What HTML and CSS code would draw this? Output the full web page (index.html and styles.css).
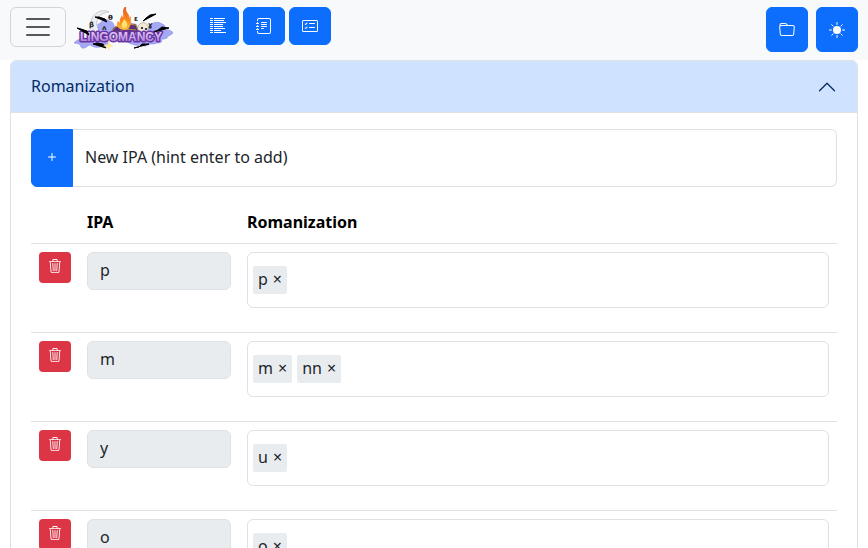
FILE: index.html
```html
<!DOCTYPE html>
<html lang="en">
<head>
<meta charset="utf-8">
<meta name="viewport" content="width=device-width, initial-scale=1">
<title>Lingomancy</title>
<link rel="stylesheet" href="styles.css">
</head>
<body>
<svg class="sprite" aria-hidden="true">
  <symbol id="trash" viewBox="0 0 16 16"><path d="M6.500 1h3a.5.5 0 0 1 .5.5v1H6v-1a.5.5 0 0 1 .5-.5M11 2.500v-1A1.500 1.500 0 0 0 9.500 0h-3A1.500 1.500 0 0 0 5 1.500v1H1.500a.5.5 0 0 0 0 1h.538l.853 10.660A2 2 0 0 0 4.885 16h6.230a2 2 0 0 0 1.994-1.840l.853-10.660h.538a.5.5 0 0 0 0-1zm1.958 1-.846 10.580a1 1 0 0 1-.997.920h-6.230a1 1 0 0 1-.997-.920L3.042 3.500zm-7.487 1a.5.5 0 0 1 .528.470l.5 8.500a.5.5 0 0 1-.998.060L5 5.030a.5.5 0 0 1 .470-.530Zm5.058 0a.5.5 0 0 1 .470.530l-.5 8.500a.5.5 0 1 1-.998-.060l.5-8.500a.5.5 0 0 1 .528-.470M8 4.500a.5.5 0 0 1 .5.5v8.500a.5.5 0 0 1-1 0V5a.5.5 0 0 1 .5-.5"/></symbol>
</svg>
<nav class="navbar" aria-label="Main">
  <div class="nav-group">
    <button class="toggler" type="button" aria-label="Toggle navigation">
      <svg width="30" height="30" viewBox="0 0 30 30"><path d="M4 7h22M4 15h22M4 23h22"/></svg>
    </button>
    <a class="brand" href="#">
      <svg class="logo" width="100" height="44" viewBox="74 7 100 44" role="img" aria-label="Lingomancy">
        <defs>
          <linearGradient id="letters" x1="0" y1="0" x2="0" y2="1"><stop offset="0" stop-color="#e6d2f7"/><stop offset=".5" stop-color="#cdaeea"/><stop offset="1" stop-color="#9a66cc"/></linearGradient>
          <linearGradient id="fire" x1="0" y1="0" x2="0" y2="1"><stop offset="0" stop-color="#e75a20"/><stop offset=".6" stop-color="#f98b20"/><stop offset="1" stop-color="#ffbd3d"/></linearGradient>
        </defs>
        <path class="moon" d="M109 12c-6-4-17 1-18 10-1 6 3 10 9 11h13c-13 0-18-5-16-12 1-5 5-8 12-9z"/>
        <g class="cloud">
          <path d="M98 27c-1-3 1-4 3-4 0-4 6-5 8-2 4 0 6 4 5 7l3 5H99z"/>
          <path d="M143 33c1-4 4-5 6-7 3-4 10-5 13-2 4 1 3 3 2 6 3-1 9 1 9 3-1 2-5 2-6 5-4 2-8 1-11 1z"/>
          <path d="M74 43c2-3 6-4 10-5h22c3 2 4 5 1 7-2 2-5 1-7 2-4 1-7 0-10-2-3 1-5 4-8 3-2-1-1-3-3-4z"/>
          <path d="M126 41c6-2 20-3 35-1 2 2 0 3-4 3-3 2-6 0-9 2-3 2-5 1-7 0-5 2-7-1-10-1z"/>
        </g>
        <path class="book" d="M109 35l5-8 13-4 9 1 3 7-8 4z"/>
        <path class="book-edge" d="M110 34l5-7 12-3 9 1 2 5M114 34l10-5 12 1"/>
        <path fill="url(#fire)" d="M124 30c-6-1-9-4-6-9l2 2c-1-4 1-5 2-8l1 3c1-3-1-6 1-10 1-2 3-1 2 1 0 4 4 5 3 9l2-2c-1 4 1 6-1 10-1 3-3 4-6 4z"/>
        <path class="flame" d="M123 28c-3-3 0-6 1-9 2 2 4 4 3 7 0 1-1 2-4 2z"/>
        <path class="skull" d="M138 27c1-5 8-6 10-1 1 3-1 5-3 7h-5c-1-1-3-4-2-6z"/>
        <circle cx="142" cy="28" r="1"/><circle cx="146" cy="29" r="1"/>
        <g class="glyphs"><text x="108" y="20">θ</text><text x="89" y="27">β</text><text x="102" y="30">ʌ</text><text x="134" y="21">ɛ</text><text x="148" y="27">ɣ</text></g>
        <text class="wordmark" x="80" y="41">LINGOMANCY</text>
        <g class="quill">
          <path d="M95 17l12 5-2-3-6-2zM77 28l12 7-2-4-6-2zM93 44l13 4-3-4-6-1zM143 21l13-7-6 1-4 3zM154 32l15-4-7-1-4 3zM134 48l15-4-7 0-3 3z"/>
        </g>
        <path class="spark" d="M109 39l1 5 4 2-4 1-1 4-2-4-4-1 5-2z"/>
      </svg>
    </a>
    <div class="tools">
      <button class="btn" type="button" aria-label="Lexicon"><svg class="icon line" viewBox="0 0 16 16"><path d="M0 .5h3M0 2.500h3M0 4.500h3M0 6.500h3M0 8.500h3M0 10.500h3M0 12.500h3M0 14.500h3M4 .5h11M4 2.500h10M4 4.500h12M4 6.500h9M4 8.500h9M4 10.500h11M4 12.500h7M4 14.500h12"/></svg></button>
      <button class="btn" type="button" aria-label="Journal"><svg class="icon" viewBox="0 0 16 16"><path d="M5 10.500a.5.5 0 0 1 .5-.5h2a.5.5 0 0 1 0 1h-2a.5.5 0 0 1-.5-.5m0-2a.5.5 0 0 1 .5-.5h5a.5.5 0 0 1 0 1h-5a.5.5 0 0 1-.5-.5m0-2a.5.5 0 0 1 .5-.5h5a.5.5 0 0 1 0 1h-5a.5.5 0 0 1-.5-.5m0-2a.5.5 0 0 1 .5-.5h5a.5.5 0 0 1 0 1h-5a.5.5 0 0 1-.5-.5"/><path d="M3 0h10a2 2 0 0 1 2 2v12a2 2 0 0 1-2 2H3a2 2 0 0 1-2-2v-1h1v1a1 1 0 0 0 1 1h10a1 1 0 0 0 1-1V2a1 1 0 0 0-1-1H3a1 1 0 0 0-1 1v1H1V2a2 2 0 0 1 2-2"/><path d="M1 5v-.5a.5.5 0 0 1 1 0V5h.5a.5.5 0 0 1 0 1h-2a.5.5 0 0 1 0-1zm0 3v-.5a.5.5 0 0 1 1 0V8h.5a.5.5 0 0 1 0 1h-2a.5.5 0 0 1 0-1zm0 3v-.5a.5.5 0 0 1 1 0v.5h.5a.5.5 0 0 1 0 1h-2a.5.5 0 0 1 0-1z"/></svg></button>
      <button class="btn" type="button" aria-label="Checklist"><svg class="icon" viewBox="0 0 16 16"><path d="M14.500 3a.5.5 0 0 1 .5.5v9a.5.5 0 0 1-.5.5h-13a.5.5 0 0 1-.5-.5v-9a.5.5 0 0 1 .5-.5zm-13-1A1.500 1.500 0 0 0 0 3.500v9A1.500 1.500 0 0 0 1.500 14h13a1.500 1.500 0 0 0 1.500-1.500v-9A1.500 1.500 0 0 0 14.500 2z"/><path d="M7 5.500a.5.5 0 0 1 .5-.5h5a.5.5 0 0 1 0 1h-5a.5.5 0 0 1-.5-.5m-1.496-.854a.5.5 0 0 1 0 .708l-1.500 1.500a.5.5 0 0 1-.708 0l-.5-.5a.5.5 0 1 1 .708-.708l.146.147 1.146-1.147a.5.5 0 0 1 .708 0M7 9.500a.5.5 0 0 1 .5-.5h5a.5.5 0 0 1 0 1h-5a.5.5 0 0 1-.5-.5m-1.496-.854a.5.5 0 0 1 0 .708l-1.500 1.500a.5.5 0 0 1-.708 0l-.5-.5a.5.5 0 0 1 .708-.708l.146.147 1.146-1.147a.5.5 0 0 1 .708 0"/></svg></button>
    </div>
  </div>
  <div class="actions">
    <button class="btn" type="button" aria-label="Open file"><svg class="icon" viewBox="0 0 16 16"><path d="M.54 3.870.5 3a2 2 0 0 1 2-2h3.672a2 2 0 0 1 1.414.586l.828.828A2 2 0 0 0 9.828 3h3.982a2 2 0 0 1 1.992 2.181l-.637 7A2 2 0 0 1 13.174 14H2.826a2 2 0 0 1-1.991-1.819l-.637-7a2 2 0 0 1 .342-1.310zM2.190 4a1 1 0 0 0-.996 1.090l.637 7a1 1 0 0 0 .995.910h10.348a1 1 0 0 0 .995-.910l.637-7A1 1 0 0 0 13.810 4zm4.690-1.707A1 1 0 0 0 6.172 2H2.500a1 1 0 0 0-1 .981l.006.139q.323-.119.684-.120h5.396z"/></svg></button>
    <button class="btn" type="button" aria-label="Light theme"><svg class="icon line" viewBox="0 0 16 16"><circle class="disc" cx="8" cy="8" r="4"/><path stroke-linecap="round" d="M8 .5v2M8 13.500v2M.5 8h2M13.500 8h2M2.700 2.700l1.400 1.400M11.900 11.900l1.400 1.400M13.300 2.700l-1.400 1.400M4.100 11.900l-1.400 1.400"/></svg></button>
  </div>
</nav>
<main class="container">
  <section class="accordion">
    <h2 class="accordion-header">
      <button class="accordion-button" type="button" aria-expanded="true" aria-controls="romanization">
        <span>Romanization</span>
        <svg class="chevron" width="20" height="20" viewBox="0 0 16 16"><path d="m2 11 6-6 6 6"/></svg>
      </button>
    </h2>
    <div class="accordion-body" id="romanization">
      <div class="input-group">
        <button class="btn add" type="button" aria-label="Add IPA"><svg class="icon line" viewBox="0 0 16 16"><path stroke-linecap="round" d="M8 4.500v7M4.500 8h7"/></svg></button>
        <div class="floating">
          <input id="new-ipa" type="text">
          <label for="new-ipa">New IPA (hint enter to add)</label>
        </div>
      </div>
      <table class="table">
        <thead><tr><th class="col-delete"></th><th class="col-ipa" scope="col">IPA</th><th scope="col">Romanization</th></tr></thead>
        <tbody>
          <tr>
            <td><button class="delete" type="button" aria-label="Delete p"><svg width="14" height="14"><use href="#trash"/></svg></button></td>
            <td><input class="ipa" type="text" value="p" aria-label="IPA" disabled></td>
            <td><div class="tags"><span class="tag">p<button type="button" aria-label="Remove p">×</button></span></div></td>
          </tr>
          <tr>
            <td><button class="delete" type="button" aria-label="Delete m"><svg width="14" height="14"><use href="#trash"/></svg></button></td>
            <td><input class="ipa" type="text" value="m" aria-label="IPA" disabled></td>
            <td><div class="tags"><span class="tag">m<button type="button" aria-label="Remove m">×</button></span><span class="tag">nn<button type="button" aria-label="Remove nn">×</button></span></div></td>
          </tr>
          <tr>
            <td><button class="delete" type="button" aria-label="Delete y"><svg width="14" height="14"><use href="#trash"/></svg></button></td>
            <td><input class="ipa" type="text" value="y" aria-label="IPA" disabled></td>
            <td><div class="tags"><span class="tag">u<button type="button" aria-label="Remove u">×</button></span></div></td>
          </tr>
          <tr>
            <td><button class="delete" type="button" aria-label="Delete o"><svg width="14" height="14"><use href="#trash"/></svg></button></td>
            <td><input class="ipa" type="text" value="o" aria-label="IPA" disabled></td>
            <td><div class="tags"><span class="tag">o<button type="button" aria-label="Remove o">×</button></span></div></td>
          </tr>
        </tbody>
      </table>
    </div>
  </section>
</main>
</body>
</html>
```
FILE: styles.css
```css
*, *::before, *::after { box-sizing: border-box; }
html { scrollbar-width: none; }
body {
  margin: 0;
  font: 16px/24px "Noto Sans", sans-serif;
  color: #212529;
  background: #fff;
}
button, input { margin: 0; font: inherit; color: inherit; }
button { cursor: pointer; }
svg { display: block; }
.sprite { position: absolute; width: 0; height: 0; }

.navbar {
  display: flex;
  justify-content: space-between;
  padding: 7px 10px 8px;
  background: #f8f9fa;
}
.nav-group { display: flex; align-items: flex-start; }
.toggler {
  padding: 4px 12px;
  border: 1px solid #d3d4d5;
  border-radius: 6px;
  background: none;
}
.toggler path { fill: none; stroke: #56595c; stroke-width: 2; stroke-linecap: round; }
.brand { margin: 0 23px 1px 8px; }
.tools { display: flex; gap: 4px; }
.actions { display: flex; gap: 8px; }
.btn {
  display: flex;
  align-items: center;
  padding: 10px 12px;
  border: 1px solid #0d6efd;
  border-radius: 6px;
  color: #fff;
  background: #0d6efd;
}
.icon { width: 16px; height: 16px; fill: currentColor; }
.line { fill: none; stroke: currentColor; }
.disc { fill: currentColor; stroke: none; }

.moon { fill: #eeeef1; stroke: #c9cad0; }
.cloud { fill: #a5a8f5; stroke: #8589dc; stroke-width: .5; }
.book { fill: #563477; }
.book-edge { fill: none; stroke: #b98a50; }
.flame { fill: #ffe36b; }
.skull { fill: #eee9d9; stroke: #8d887e; stroke-width: .5; }
.quill { fill: #000; stroke: #000; stroke-width: 1; }
.glyphs { font: bold 7px "DejaVu Sans", sans-serif; fill: #222; }
.wordmark {
  font: bold 12px "Liberation Sans", sans-serif;
  fill: url(#letters);
  stroke: #6a35a3;
  stroke-width: 3;
  stroke-linejoin: round;
  paint-order: stroke;
}
.spark { fill: #ffe9a3; }

.container { padding: 0 10px; }
.accordion { border: 1px solid #dee2e6; border-radius: 6px; }
.accordion-header { margin: 0; font: inherit; }
.accordion-button {
  display: flex;
  align-items: center;
  justify-content: space-between;
  width: 100%;
  padding: 16px 20px;
  border: 0;
  border-radius: 5px 5px 0 0;
  line-height: 18px;
  color: #052c65;
  background: #cfe2ff;
  box-shadow: inset 0 -1px 0 #dee2e6;
}
.accordion-button span { padding-bottom: 2px; }
.chevron path { fill: none; stroke: #052c65; stroke-linecap: round; stroke-linejoin: round; }
.accordion-body { padding: 16px 20px; }

.input-group { display: flex; margin-bottom: 16px; }
.add { padding-bottom: 12px; border-radius: 6px 0 0 6px; }
.floating { display: grid; flex: 1; }
.floating > * { grid-area: 1 / 1; }
.floating input {
  width: 100%;
  padding: 16px 12px;
  border: 1px solid #dee2e6;
  border-left: 0;
  border-radius: 0 6px 6px 0;
  background: #fff;
}
.floating label { padding: 16px 12px 18px; pointer-events: none; }
.floating input:not(:focus) { color: transparent; }

.table { width: 100%; border-collapse: collapse; table-layout: fixed; }
.table th, .table td { padding: 8px; border-bottom: 1px solid #dee2e6; text-align: left; vertical-align: top; }
.table th { padding: 7px 8px 9px; color: #000; }
.col-delete { width: 48px; }
.col-ipa { width: 160px; }
.delete {
  padding: 7px 9px 10px;
  border: 0;
  border-radius: 4px;
  color: #fff;
  background: #dc3545;
}
.delete svg { fill: currentColor; }
.ipa {
  display: block;
  width: 100%;
  height: 38px;
  padding: 5px 12px 7px;
  border: 1px solid #dee2e6;
  border-radius: 6px;
  background: #e9ecef;
}
.tags {
  display: flex;
  gap: 5px;
  margin-bottom: 16px;
  padding: 13px 5px;
  border: 1px solid #dee2e6;
  border-radius: 6px;
}
.tag {
  display: flex;
  gap: 5px;
  padding: 1px 5px 3px;
  border-radius: 2px;
  background: #e9ecef;
}
.tag button { padding: 0; border: 0; background: none; }
```
